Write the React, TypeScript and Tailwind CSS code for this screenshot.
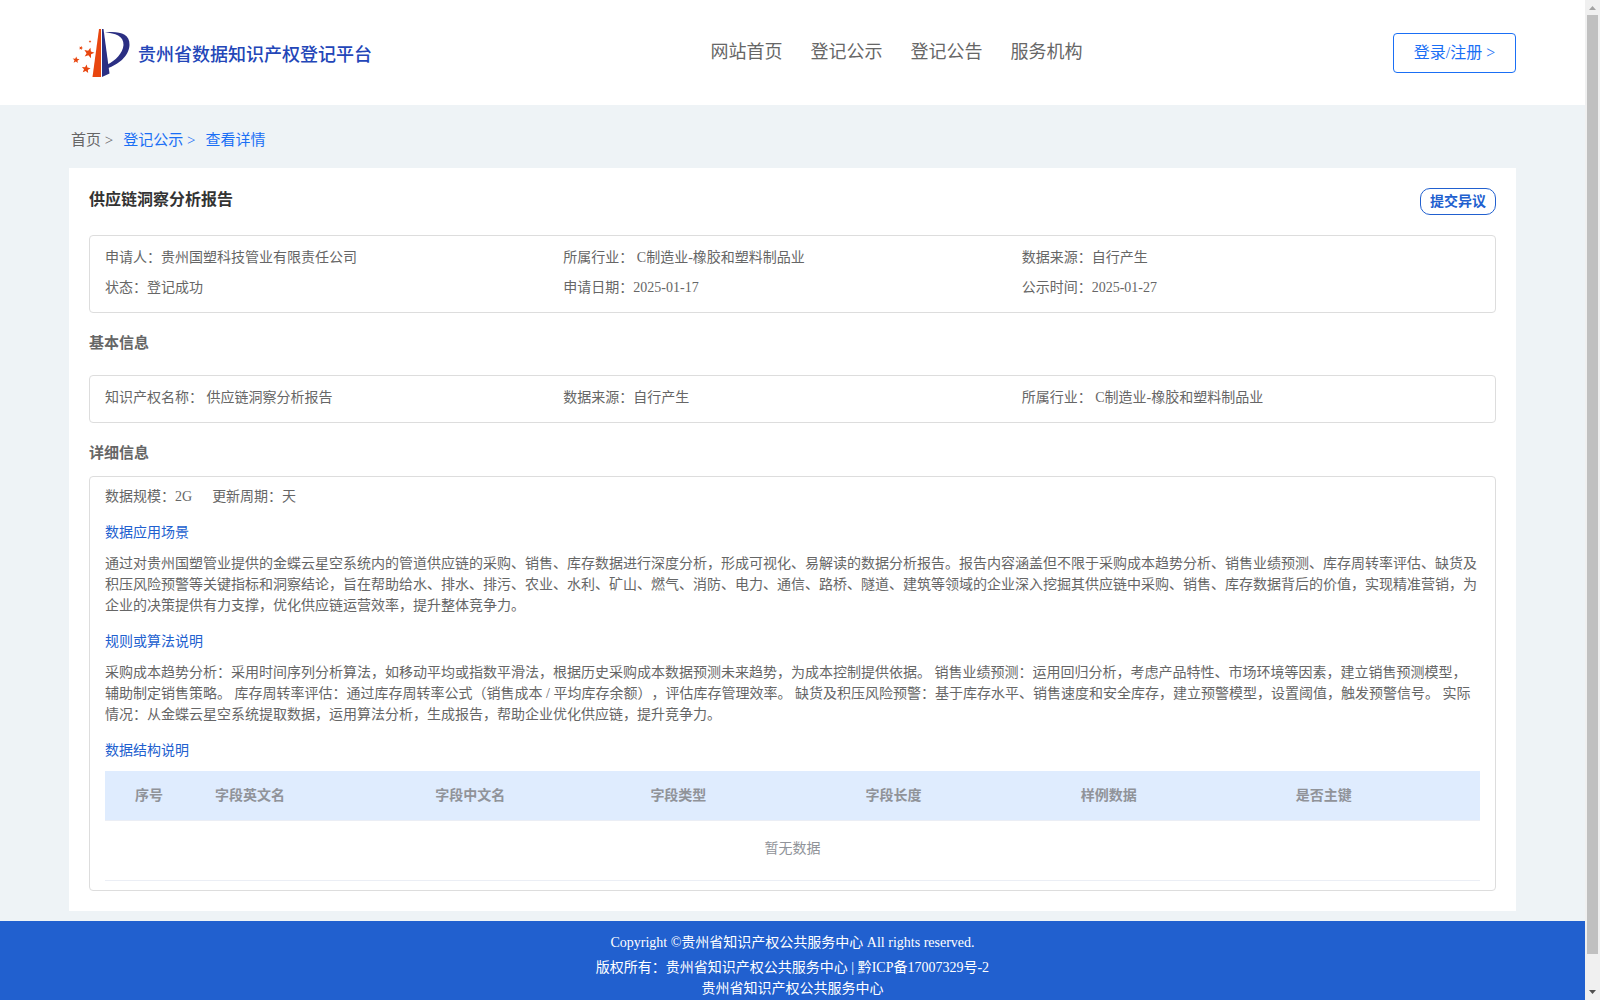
import { ReactNode } from "react";

type FieldItem = { label: string; value: string };

const navItems = ["网站首页", "登记公示", "登记公告", "服务机构"];

const summary: FieldItem[] = [
  { label: "申请人：", value: "贵州国塑科技管业有限责任公司" },
  { label: "所属行业：", value: " C制造业-橡胶和塑料制品业" },
  { label: "数据来源：", value: "自行产生" },
  { label: "状态：", value: "登记成功" },
  { label: "申请日期：", value: "2025-01-17" },
  { label: "公示时间：", value: "2025-01-27" },
];

const basicInfo: FieldItem[] = [
  { label: "知识产权名称：", value: " 供应链洞察分析报告" },
  { label: "数据来源：", value: "自行产生" },
  { label: "所属行业：", value: " C制造业-橡胶和塑料制品业" },
];

const columns = [
  { title: "字段英文名", width: "w-[220px]" },
  { title: "字段中文名", width: "w-[215px]" },
  { title: "字段类型", width: "w-[215px]" },
  { title: "字段长度", width: "w-[215px]" },
  { title: "样例数据", width: "w-[215px]" },
  { title: "是否主键", width: "w-[194px]" },
];

const scenario =
  "通过对贵州国塑管业提供的金蝶云星空系统内的管道供应链的采购、销售、库存数据进行深度分析，形成可视化、易解读的数据分析报告。报告内容涵盖但不限于采购成本趋势分析、销售业绩预测、库存周转率评估、缺货及积压风险预警等关键指标和洞察结论，旨在帮助给水、排水、排污、农业、水利、矿山、燃气、消防、电力、通信、路桥、隧道、建筑等领域的企业深入挖掘其供应链中采购、销售、库存数据背后的价值，实现精准营销，为企业的决策提供有力支撑，优化供应链运营效率，提升整体竞争力。";

const algorithm =
  "采购成本趋势分析：采用时间序列分析算法，如移动平均或指数平滑法，根据历史采购成本数据预测未来趋势，为成本控制提供依据。 销售业绩预测：运用回归分析，考虑产品特性、市场环境等因素，建立销售预测模型，辅助制定销售策略。 库存周转率评估：通过库存周转率公式（销售成本 / 平均库存余额），评估库存管理效率。 缺货及积压风险预警：基于库存水平、销售速度和安全库存，建立预警模型，设置阈值，触发预警信号。 实际情况：从金蝶云星空系统提取数据，运用算法分析，生成报告，帮助企业优化供应链，提升竞争力。";

const stars = [
  { x: 17, y: 25, scale: 0.55, angle: 15 },
  { x: 14, y: 41, scale: 0.46, angle: 8 },
  { x: 4, y: 32, scale: 0.36, angle: 5 },
  { x: 9, y: 20, scale: 0.22, angle: 20 },
  { x: 18, y: 13.5, scale: 0.14, angle: 0 },
];

const Logo = () => {
  return (
    <svg viewBox="0 0 58 50" className="h-[50px] w-[58px]" aria-hidden="true">
      <path d="M27 1h2v48h-8.500z" fill="#e8460f" />
      <path d="M30 1h1.500l6 44.500-7.500 3.500z" fill="#2b2f83" />
      <path
        d="M33 4.500C46 3 58 5 57.500 17 57 29 45 37 36 40l-.5-3.500C43 33 51 25 51.500 17 52 8 43 5 33 4.500z"
        fill="#2b2f83"
      />
      {stars.map((s) => (
        <polygon
          key={s.y}
          points="0,-10 2.600,-3.600 9.500,-3.100 4.200,1.400 5.900,8.100 0,4.400 -5.900,8.100 -4.200,1.400 -9.500,-3.100 -2.600,-3.600"
          transform={`translate(${s.x} ${s.y}) rotate(${s.angle}) scale(${s.scale})`}
          fill="#e8460f"
        />
      ))}
    </svg>
  );
};

const Header = () => {
  return (
    <header className="flex h-[105px] items-center justify-between bg-white px-[69px]">
      <div className="flex items-center gap-2 pl-[3px]">
        <Logo />
        <h1 className="pt-1 text-lg font-medium text-[#2346b8]">
          贵州省数据知识产权登记平台
        </h1>
      </div>
      <nav className="flex gap-7 pb-0.5 pl-7 text-lg text-[#666]">
        {navItems.map((item) => (
          <a href="#" key={item}>
            {item}
          </a>
        ))}
      </nav>
      <button className="h-10 w-[123px] rounded border border-[#1a6ff5] text-[#1a6ff5]">
        登录/注册 &gt;
      </button>
    </header>
  );
};

const Breadcrumb = () => {
  return (
    <nav className="flex h-[63px] items-center gap-[10px] pt-[7px] pl-0.5 text-[15px] text-[#1a6ff5]">
      <a href="#" className="text-[#666]">
        首页 &gt;
      </a>
      <a href="#">登记公示 &gt;</a>
      <a href="#">查看详情</a>
    </nav>
  );
};

const Panel = ({ children }: { children: ReactNode }) => {
  return (
    <div className="rounded border border-[#ddd] px-[15px]">{children}</div>
  );
};

const FieldGrid = ({ items }: { items: FieldItem[] }) => {
  return (
    <Panel>
      <dl className="grid grid-cols-3 py-2 leading-[28px]">
        {items.map((item) => (
          <div key={item.label} className="flex h-[30px] whitespace-pre">
            <dt>{item.label}</dt>
            <dd>{item.value}</dd>
          </div>
        ))}
      </dl>
    </Panel>
  );
};

const SubTitle = ({ children }: { children: ReactNode }) => {
  return <h4 className="mt-[15px] mb-[10px] text-[#2160cf]">{children}</h4>;
};

const StructureTable = () => {
  return (
    <table className="w-full table-fixed text-left text-[#909399]">
      <thead>
        <tr className="h-[49px] border-b border-[#ebeef5] bg-[#dfecfe]">
          <th className="w-[100px] pr-3 text-center">序号</th>
          {columns.map((column) => (
            <th key={column.title} className={`${column.width} px-[10px]`}>
              {column.title}
            </th>
          ))}
        </tr>
      </thead>
      <tbody>
        <tr className="h-[60px] border-b border-[#ebeef5]">
          <td colSpan={7} className="pb-1 text-center">
            暂无数据
          </td>
        </tr>
      </tbody>
    </table>
  );
};

const Footer = () => {
  return (
    <footer className="flex-1 bg-[#2160cf] pt-[11px] text-center text-sm leading-[21px] text-white">
      <p className="mb-1">
        Copyright ©贵州省知识产权公共服务中心 All rights reserved.
      </p>
      <p>
        版权所有：贵州省知识产权公共服务中心 |{" "}
        <a href="#">黔ICP备17007329号-2</a>
      </p>
      <p>贵州省知识产权公共服务中心</p>
    </footer>
  );
};

const ScrollBar = () => {
  return (
    <div className="flex w-[15px] shrink-0 flex-col items-center bg-[#f0f0f0]">
      <svg viewBox="0 0 15 15" className="h-[15px] w-[15px]" aria-hidden="true">
        <path d="M4 10h7L7.500 6z" fill="#a3a3a3" />
      </svg>
      <div className="h-[939px] w-[11px] bg-[#c0c0c0]" />
      <svg
        viewBox="0 0 15 15"
        className="mt-auto h-[15px] w-[15px]"
        aria-hidden="true"
      >
        <path d="M4 5h7L7.500 9z" fill="#505050" />
      </svg>
    </div>
  );
};

export default function App() {
  return (
    <div
      lang="zh-CN"
      className="flex h-screen overflow-hidden font-['Liberation_Serif','Noto_Sans_CJK_SC',serif] [text-spacing-trim:space-all]"
    >
      <div className="flex min-w-0 flex-1 flex-col bg-[#eef3f6]">
        <Header />
        <main className="px-[69px] pb-[10px] text-sm leading-[21px] text-[#666]">
          <Breadcrumb />
          <article className="bg-white p-5">
            <div className="mb-5 flex items-start justify-between">
              <h2 className="text-base font-bold text-[#333]">
                供应链洞察分析报告
              </h2>
              <button className="h-[27px] w-[76px] rounded-[10px] border border-[#2160cf] leading-none font-bold text-[#2160cf]">
                提交异议
              </button>
            </div>
            <FieldGrid items={summary} />
            <h3 className="mt-5 mb-[21px] text-[15px] font-bold">基本信息</h3>
            <FieldGrid items={basicInfo} />
            <h3 className="mt-5 mb-3 text-[15px] font-bold">详细信息</h3>
            <Panel>
              <section className="py-[9px]">
                <p className="flex gap-5">
                  <span>数据规模：2G</span>
                  <span>更新周期：天</span>
                </p>
                <SubTitle>数据应用场景</SubTitle>
                <p>{scenario}</p>
                <SubTitle>规则或算法说明</SubTitle>
                <p>{algorithm}</p>
                <SubTitle>数据结构说明</SubTitle>
                <StructureTable />
              </section>
            </Panel>
          </article>
        </main>
        <Footer />
      </div>
      <ScrollBar />
    </div>
  );
}
